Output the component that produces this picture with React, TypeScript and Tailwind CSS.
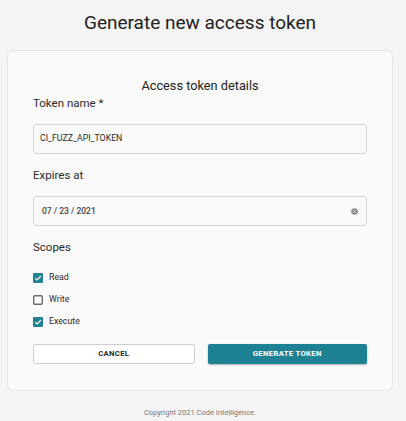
import React from "react";

function Check({ checked }: { checked: boolean }) {
  if (checked) {
    return (
      <svg width="10" height="10" viewBox="0 0 10 10" className="shrink-0">
        <rect x="0" y="0" width="10" height="10" rx="1.3" fill="#1e8294" />
        <path d="M2.1 5.1 L4.1 7 L7.9 3" stroke="#ffffff" strokeWidth="1.2" fill="none" />
      </svg>
    );
  }
  return (
    <svg width="10" height="10" viewBox="0 0 10 10" className="shrink-0">
      <rect x="0.7" y="0.7" width="8.6" height="8.6" rx="1.1" fill="none" stroke="#6b6b6b" strokeWidth="1.4" />
    </svg>
  );
}

export default function App() {
  const scopes = [
    { label: "Read", checked: true },
    { label: "Write", checked: false },
    { label: "Execute", checked: true },
  ];
  return (
    <div
      className="w-[406px] h-[421px] bg-[#f4f4f4] text-[#262626]"
      style={{ fontFamily: "Roboto, 'Liberation Sans', sans-serif" }}
    >
      <div className="w-[400px] flex flex-col items-center">
        <div className="pt-[9px] text-[19px] leading-[28px] text-[#222]">Generate new access token</div>
        <div className="mt-[13px] w-[386px] h-[341px] bg-[#fafafa] border border-[#e6e6e6] rounded-[7px] px-[25px] pt-[27px]">
          <div className="text-center text-[12.75px] leading-[16px] text-[#222]">Access token details</div>
          <div className="text-[11.5px] leading-[18px] text-[#2a2a2a]">Token name *</div>
          <div className="mt-[12px] h-[30px] border border-[#d4d4d4] rounded-[3px] flex items-center pl-[6px] text-[8.75px] text-[#2a2a2a]">
            CI_FUZZ_API_TOKEN
          </div>
          <div className="mt-[12px] text-[11.5px] leading-[18px] text-[#2a2a2a]">Expires at</div>
          <div className="mt-[12px] h-[30px] border border-[#d4d4d4] rounded-[3px] flex items-center justify-between pl-[8px] pr-[8px] text-[8.5px] font-medium text-[#444]">
            <span>07 / 23 / 2021</span>
            <svg width="7" height="7" viewBox="0 0 8 8">
              <circle cx="4" cy="4" r="3.8" fill="#8a8a8a" />
              <path d="M2.6 2.6 L5.4 5.4 M5.4 2.6 L2.6 5.4" stroke="#e8e8e8" strokeWidth="1" />
            </svg>
          </div>
          <div className="mt-[12px] text-[11.5px] leading-[18px] text-[#2a2a2a]">Scopes</div>
          <div className="mt-[11px] flex flex-col">
            {scopes.map((s) => (
              <div key={s.label} className="h-[22px] flex items-center gap-[6px] text-[8.75px] text-[#2a2a2a]">
                <Check checked={s.checked} />
                <span>{s.label}</span>
              </div>
            ))}
          </div>
          <div className="mt-[11px] flex gap-[13px]">
            <div className="flex-1 h-[20px] border border-[#cfcfcf] rounded-[2px] bg-white flex items-center justify-center text-[7.75px] font-bold tracking-[0.3px] text-[#2a2a2a]">
              CANCEL
            </div>
            <div className="flex-1 h-[20px] rounded-[2px] bg-[#1e8294] shadow-[0_1px_2px_rgba(0,0,0,0.3)] flex items-center justify-center text-[7.75px] font-bold tracking-[0.3px] text-white">
              GENERATE TOKEN
            </div>
          </div>
        </div>
        <div className="mt-[16px] text-[7.5px] leading-[12px] text-[#7a7a7a]">Copyright 2021 Code Intelligence.</div>
      </div>
    </div>
  );
}
